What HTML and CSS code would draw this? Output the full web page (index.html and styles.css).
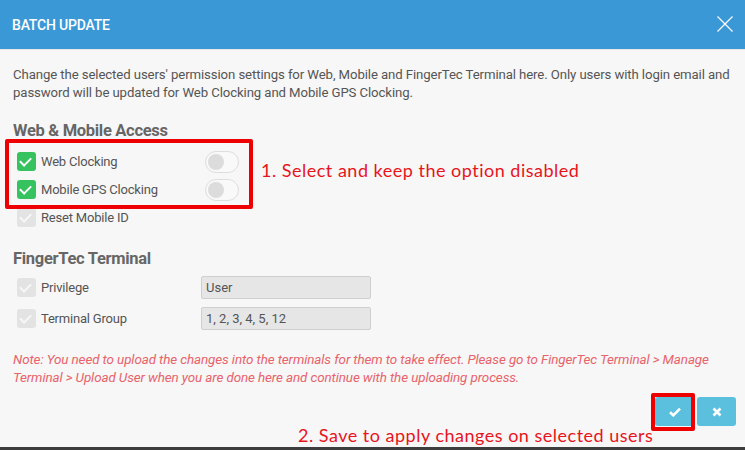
FILE: index.html
```html
<!DOCTYPE html>
<html>
<head>
  <title>Batch Update</title>
  <link rel="stylesheet" href="styles.css">
</head>
<body>
  <div class="modal">
    <div class="modal-header">
      <h4 class="modal-title">BATCH UPDATE</h4>
      <span class="close">
        <svg width="16" height="16" viewBox="0 0 16 16"><path d="M0.5 0.5 L15.5 15.5 M15.5 0.5 L0.5 15.5" stroke="#fff" stroke-width="1.2" fill="none"/></svg>
      </span>
    </div>

    <div class="modal-body">
      <p class="intro">Change the selected users' permission settings for Web, Mobile and FingerTec Terminal here. Only users with login email and password will be updated for Web Clocking and Mobile GPS Clocking.</p>

      <h5 class="section-title">Web &amp; Mobile Access</h5>
      <div class="option-list">
        <div class="option">
          <span class="check checked"></span>
          <span class="option-label">Web Clocking</span>
          <span class="switch"></span>
        </div>
        <div class="option">
          <span class="check checked"></span>
          <span class="option-label">Mobile GPS Clocking</span>
          <span class="switch"></span>
        </div>
        <div class="option">
          <span class="check"></span>
          <span class="option-label">Reset Mobile ID</span>
        </div>
        <div class="callout callout-one"></div>
        <div class="hint hint-one">1. Select and keep the option disabled</div>
      </div>

      <h5 class="section-title terminal">FingerTec Terminal</h5>
      <div class="option-list fields">
        <div class="option field">
          <span class="check"></span>
          <span class="option-label">Privilege</span>
          <input class="field-input" type="text" value="User" disabled>
        </div>
        <div class="option field">
          <span class="check"></span>
          <span class="option-label">Terminal Group</span>
          <input class="field-input" type="text" value="1, 2, 3, 4, 5, 12" disabled>
        </div>
      </div>

      <p class="note">Note: You need to upload the changes into the terminals for them to take effect. Please go to FingerTec Terminal &gt; Manage Terminal &gt; Upload User when you are done here and continue with the uploading process.</p>
    </div>

    <div class="modal-footer">
      <button class="btn btn-save">
        <svg width="12" height="10" viewBox="0 0 12 10"><path d="M1 5.2 L4.3 8.3 L11 1.6" stroke="#fff" stroke-width="2.6" fill="none"/></svg>
        <span class="callout callout-two"></span>
      </button>
      <button class="btn btn-cancel">
        <svg width="10" height="10" viewBox="0 0 10 10"><path d="M1.5 1.5 L8.5 8.5 M8.5 1.5 L1.5 8.5" stroke="#fff" stroke-width="2.6" fill="none"/></svg>
      </button>
      <div class="hint hint-two">2. Save to apply changes on selected users</div>
    </div>
  </div>
</body>
</html>
```

FILE: styles.css
```css
body {
  margin: 0;
  padding: 0;
  background-color: #3d3d3d;
  font-family: Roboto, "Liberation Sans", sans-serif;
  width: 745px;
  height: 450px;
  overflow: hidden;
}
.modal {
  height: 447px;
  background-color: #f7f7f7;
  display: flex;
  flex-direction: column;
}
.modal-header {
  height: 49px;
  background-color: #3a98d7;
  border-bottom: 1px solid #e6e6e6;
  display: flex;
  align-items: center;
  justify-content: space-between;
  padding: 0 12px 0 12px;
}
.modal-title {
  margin: 0;
  color: #ffffff;
  font-size: 14px;
  font-weight: 500;
  letter-spacing: -0.2px;
}
.close {
  display: flex;
  margin-top: -2px;
}
.modal-body {
  padding: 16px 8px 0 13px;
  color: #555555;
}
.intro {
  margin: 0;
  font-size: 13.2px;
  line-height: 18px;
  letter-spacing: -0.1px;
}
.section-title {
  margin: 19px 0 11px 0;
  font-size: 16.5px;
  line-height: 20px;
  font-weight: 700;
  color: #666666;
  letter-spacing: -0.3px;
}
.section-title.terminal {
  margin-top: 22px;
  margin-bottom: 7px;
}
.option-list {
  position: relative;
  display: flex;
  flex-direction: column;
  gap: 9px;
}
.option-list.fields {
  gap: 8px;
}
.option {
  display: flex;
  align-items: center;
  height: 19px;
  padding-left: 4px;
}
.field {
  height: 23px;
}
.check {
  width: 19px;
  height: 19px;
  border-radius: 3px;
  background-color: #e3e3e3;
  position: relative;
  flex-shrink: 0;
}
.check::after {
  content: "";
  position: absolute;
  left: 5px;
  top: 3px;
  width: 5px;
  height: 9px;
  border-right: 2px solid #f7f7f7;
  border-bottom: 2px solid #f7f7f7;
  transform: rotate(45deg);
}
.check.checked {
  background-color: #36c25f;
}
.check.checked::after {
  border-color: #ffffff;
}
.option-label {
  margin-left: 5px;
  width: 164px;
  font-size: 13px;
  letter-spacing: -0.2px;
}
.field .option-label {
  width: 160px;
}
.switch {
  width: 32px;
  height: 20px;
  border: 1px solid #dedede;
  border-radius: 11px;
  background-color: #f9f9f9;
  position: relative;
}
.switch::before {
  content: "";
  position: absolute;
  left: 2px;
  top: 2px;
  width: 16px;
  height: 16px;
  border-radius: 50%;
  background-color: #dcdcdc;
}
.field-input {
  width: 170px;
  height: 23px;
  box-sizing: border-box;
  border: 1px solid #cfcfcf;
  border-radius: 2px;
  background-color: #e6e6e6;
  color: #555555;
  font-family: Roboto, "Liberation Sans", sans-serif;
  font-size: 13px;
  padding: 0 4px;
}
.note {
  margin: 21px 0 0 0;
  color: #e8636b;
  font-style: italic;
  font-size: 13.4px;
  line-height: 18px;
  letter-spacing: -0.1px;
}
.modal-footer {
  margin-top: auto;
  padding: 0 9px 21px 0;
  display: flex;
  justify-content: flex-end;
  gap: 3px;
  position: relative;
}
.btn {
  width: 39px;
  height: 29px;
  border: none;
  border-radius: 3px;
  background-color: #5bc0de;
  display: flex;
  align-items: center;
  justify-content: center;
  padding: 0;
  position: relative;
}
.callout {
  position: absolute;
  border: 4px solid #ee0000;
  border-radius: 2px;
}
.callout-one {
  left: -8px;
  top: -13px;
  width: 240px;
  height: 62px;
}
.callout-two {
  left: -4px;
  top: -4px;
  width: 36px;
  height: 30px;
}
.hint {
  position: absolute;
  color: #e8141c;
  font-family: Lato, "Open Sans", sans-serif;
  font-size: 18px;
  line-height: 22px;
  letter-spacing: 0.5px;
  white-space: nowrap;
}
.hint-one {
  left: 248px;
  top: 7px;
}
.hint-two {
  left: 298px;
  bottom: 1px;
}
```
